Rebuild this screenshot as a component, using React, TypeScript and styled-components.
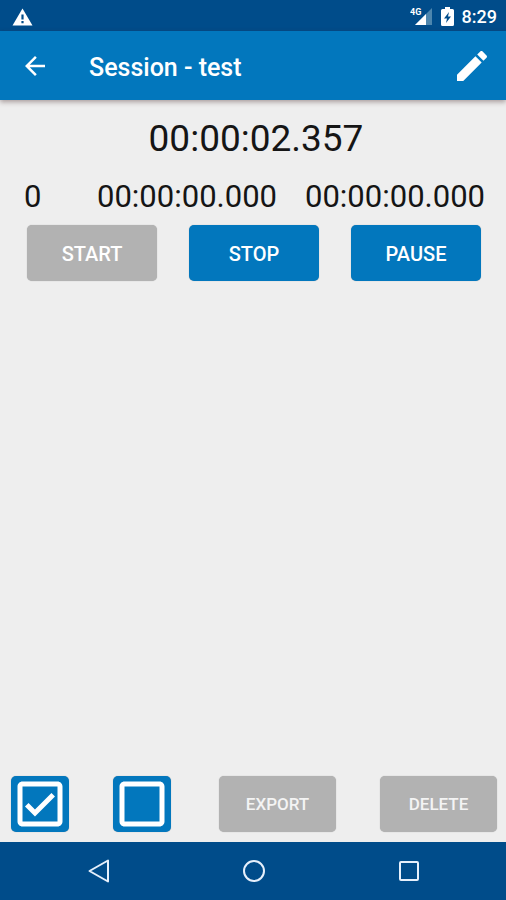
import React, { useState } from "react";
import styled, { createGlobalStyle } from "styled-components";

const GlobalStyle = createGlobalStyle`
  * { box-sizing: border-box; }
  body { margin: 0; background: #eeeeee; }
  button { font-family: inherit; border: 0; padding: 0; cursor: pointer; }
  svg { display: block; }
`;

const Screen = styled.div`
  min-height: 100vh;
  display: flex;
  flex-direction: column;
  background: #eeeeee;
  color: #151515;
  font-family: Roboto, "Liberation Sans", sans-serif;
`;

const StatusBar = styled.div`
  height: 31px;
  padding: 2px 9px 0 12px;
  display: flex;
  align-items: center;
  justify-content: space-between;
  background: #004c8a;
  color: #ffffff;
`;

const StatusIcons = styled.div`
  display: flex;
  align-items: center;
  gap: 8px;
`;

const Clock = styled.time`
  font-size: 18px;
  line-height: 20px;
  font-weight: 500;
`;

const AppBar = styled.header`
  height: 69px;
  padding: 0 14px 0 20px;
  display: flex;
  align-items: center;
  background: #0277bd;
  color: #ffffff;
  box-shadow: 0 2px 5px rgba(60, 30, 30, 0.4);
`;

const Title = styled.h1`
  flex: 1;
  margin: 0 0 0 39px;
  padding-top: 4px;
  font-size: 25px;
  line-height: 32px;
  font-weight: 500;
`;

const IconButton = styled.button`
  background: none;
  color: #ffffff;
`;

const Main = styled.main`
  flex: 1;
  display: flex;
  flex-direction: column;
`;

const Timer = styled.div`
  margin-top: 16px;
  padding-left: 6px;
  font-size: 37px;
  line-height: 46px;
  text-align: center;
`;

const LapRow = styled.div`
  margin-top: 16px;
  padding: 0 21px 0 24px;
  display: flex;
  justify-content: space-between;
  font-size: 31px;
  line-height: 38px;
`;

const LapTimes = styled.div`
  display: flex;
  gap: 28px;
`;

const ActionRow = styled.div`
  margin-top: 9px;
  padding: 0 25px 0 27px;
  display: grid;
  grid-template-columns: repeat(3, 1fr);
  gap: 32px;
`;

const ActionButton = styled.button<{ $small?: boolean }>`
  height: 56px;
  min-width: 117px;
  padding-top: ${(p) => (p.$small ? 0 : 2)}px;
  border-radius: 5px;
  background: #0277bd;
  color: #ffffff;
  font-size: ${(p) => (p.$small ? 17 : 20)}px;
  font-weight: 500;
  box-shadow: 0 0 1px rgba(0, 0, 0, 0.3);

  &:disabled {
    background: #b2b2b2;
    color: ${(p) => (p.$small ? "#f4f4f4" : "#ffffff")};
    cursor: default;
  }
`;

const BottomRow = styled.footer`
  margin-top: auto;
  padding: 0 9px 10px 11px;
  display: flex;
  justify-content: space-between;
`;

const ButtonGroup = styled.div`
  display: flex;
  gap: 44px;
`;

const ToggleButton = styled.button`
  width: 58px;
  height: 56px;
  display: flex;
  align-items: center;
  justify-content: center;
  border-radius: 5px;
  background: #0277bd;
  color: #ffffff;
  box-shadow: 0 0 1px rgba(0, 0, 0, 0.3);
`;

const NavBar = styled.nav`
  height: 58px;
  padding: 0 20px 0 22px;
  display: grid;
  grid-template-columns: repeat(3, 1fr);
  background: #004c8a;
`;

const NavButton = styled.button`
  display: flex;
  align-items: center;
  justify-content: center;
  background: none;
  color: #e6f0fc;
`;

const boxPath =
  "M19 3H5c-1.1 0-2 .9-2 2v14c0 1.1.9 2 2 2h14c1.1 0 2-.9 2-2V5c0-1.1-.9-2-2-2zm0 16H5V5h14v14z";
const tickPath = "M17.99 9l-1.41-1.42-6.59 6.59-2.58-2.57-1.42 1.41 4 3.99z";

function CheckBoxIcon({ checked }: { checked?: boolean }) {
  return (
    <svg width="50" height="50" viewBox="2 2 20 20" fill="currentColor" aria-hidden="true">
      <path d={boxPath} />
      {checked && <path d={tickPath} />}
    </svg>
  );
}

export default function App() {
  const [running, setRunning] = useState(true);

  return (
    <Screen>
      <GlobalStyle />
      <StatusBar>
        <svg width="21" height="18" viewBox="0 0 21 18" aria-label="Warning">
          <path d="M10.5 0.5L20.5 17.5H0.5z" fill="#fff" />
          <path d="M9.4 6.5h2.2v5H9.4zM9.4 13h2.2v2.2H9.4z" fill="#004c8a" />
        </svg>
        <StatusIcons>
          <svg width="23" height="20" viewBox="0 0 23 20" aria-label="4G signal">
            <path d="M22 1v17H5z" fill="#4d86ae" />
            <path d="M16 7V18H5z" fill="#fff" />
            <text x="0" y="8" fill="#fff" fontSize="9" fontWeight="700">4G</text>
          </svg>
          <svg width="13" height="20" viewBox="0 0 13 20" aria-label="Battery charging">
            <path
              fillRule="evenodd"
              fill="#fff"
              d="M4 0h5v2h2.500Q13 2 13 3.500V17.500Q13 19 11.500 19H1.500Q0 19 0 17.500V3.500Q0 2 1.500 2H4zM8 5L3 11.500H6L5 16L10 9.500H7z"
            />
          </svg>
          <Clock>8:29</Clock>
        </StatusIcons>
      </StatusBar>

      <AppBar>
        <IconButton type="button" aria-label="Back">
          <svg width="30" height="30" viewBox="0 0 24 24" fill="currentColor">
            <path d="M20 11H7.830l5.590-5.590L12 4l-8 8 8 8 1.410-1.410L7.830 13H20v-2z" />
          </svg>
        </IconButton>
        <Title>Session - test</Title>
        <IconButton type="button" aria-label="Edit session">
          <svg width="40" height="40" viewBox="0 0 24 24" fill="currentColor">
            <path d="M3 17.250V21h3.750L17.810 9.940l-3.750-3.750L3 17.250zM20.710 7.040c.39-.39.39-1.020 0-1.410l-2.340-2.340c-.39-.39-1.020-.39-1.410 0l-1.830 1.830 3.750 3.750 1.830-1.830z" />
          </svg>
        </IconButton>
      </AppBar>

      <Main>
        <Timer role="timer">00:00:02.357</Timer>
        <LapRow>
          <span>0</span>
          <LapTimes>
            <span>00:00:00.000</span>
            <span>00:00:00.000</span>
          </LapTimes>
        </LapRow>
        <ActionRow>
          <ActionButton type="button" disabled={running} onClick={() => setRunning(true)}>
            START
          </ActionButton>
          <ActionButton type="button" disabled={!running} onClick={() => setRunning(false)}>
            STOP
          </ActionButton>
          <ActionButton type="button" disabled={!running}>
            PAUSE
          </ActionButton>
        </ActionRow>
        <BottomRow>
          <ButtonGroup>
            <ToggleButton type="button" aria-label="Select all">
              <CheckBoxIcon checked />
            </ToggleButton>
            <ToggleButton type="button" aria-label="Select none">
              <CheckBoxIcon />
            </ToggleButton>
          </ButtonGroup>
          <ButtonGroup>
            <ActionButton type="button" $small disabled>
              EXPORT
            </ActionButton>
            <ActionButton type="button" $small disabled>
              DELETE
            </ActionButton>
          </ButtonGroup>
        </BottomRow>
      </Main>

      <NavBar>
        <NavButton type="button" aria-label="Back">
          <svg width="24" height="24" viewBox="0 0 24 24" fill="none" stroke="currentColor" strokeWidth="2" strokeLinejoin="round">
            <path d="M21 1.500V22.500L2.500 12z" />
          </svg>
        </NavButton>
        <NavButton type="button" aria-label="Home">
          <svg width="24" height="24" viewBox="0 0 24 24" fill="none" stroke="currentColor" strokeWidth="2">
            <circle cx="12" cy="12" r="10" />
          </svg>
        </NavButton>
        <NavButton type="button" aria-label="Recent apps">
          <svg width="24" height="24" viewBox="0 0 24 24" fill="none" stroke="currentColor" strokeWidth="2" strokeLinejoin="round">
            <rect x="3" y="3" width="18" height="18" rx="1" />
          </svg>
        </NavButton>
      </NavBar>
    </Screen>
  );
}
